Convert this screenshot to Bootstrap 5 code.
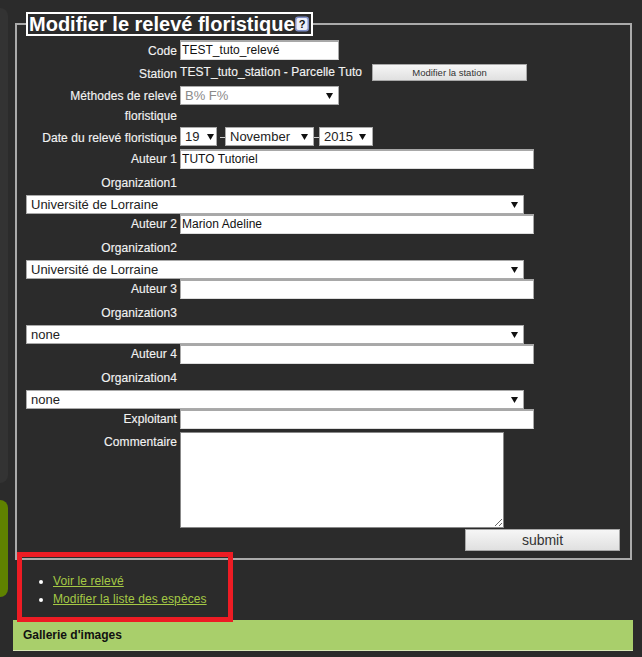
<!DOCTYPE html>
<html lang="fr">
<head>
<meta charset="utf-8">
<title>Modifier le relevé floristique</title>
<link href="https://cdn.jsdelivr.net/npm/bootstrap@5.3.0/dist/css/bootstrap.min.css" rel="stylesheet">
<style>
html,body{height:100%}
body{background:#2b2b2b;color:#ececec;font-family:"Liberation Sans",Arial,sans-serif;font-size:12px;line-height:20px;overflow:hidden}
.cadre{position:relative;height:657px}
.rail{width:8px;flex:none}
.rail-gris{height:475px;margin-top:8px;background:#333;border-radius:0 9px 9px 0}
.rail-vert{height:97px;margin-top:17px;background:#5f8200;border-radius:0 8px 8px 0}
.principal{width:625px;margin-left:5px;flex:none}
.bloc{margin:12px 0 0 2px;width:617px;height:548px;border:2px solid #aaa;border-radius:0;padding:4px 9px 0;min-width:0}
.bloc legend{float:none;width:auto;margin:0;padding:0 2px 0 1px;border:2px solid #fff;font-size:20px;font-weight:700;line-height:20px;color:#fff;height:24px;display:flex;align-items:center;gap:0}
.aide{display:block;flex:none}
.rang{display:flex;align-items:flex-start;column-gap:3px}
.lib{width:151px;flex:none;text-align:right;margin:1px 0 0;color:#f2f2f2;letter-spacing:.08px;-webkit-text-stroke:.15px #f2f2f2}
.lib.m0{margin-top:0}.lib.m3{margin-top:3px}.lib.m4{margin-top:4px}
.h-code{height:20px}.h-sta{height:26px}.h-met{height:41px}.h-dat{height:22px}.h-aut{height:20px}.h-org{height:26px}.h-sel{height:19px}.h-com{height:100px}
.bloc .champ{display:block;height:20px;padding:0 1px 2px;font-family:inherit;font-size:12px;line-height:16px;color:#111;background:#fff;border:0;border-top:2px solid #a8a8a8;border-radius:0;box-shadow:none;border-left:1px solid #a8a8a8;border-right:1px solid #a8a8a8;border-bottom:1px solid #ddd;letter-spacing:.05px}
.l-court{width:159px}.l-long{width:354px}
.bloc .choix{display:block;height:19px;padding:0 16px 0 4px;font-family:inherit;font-size:13px;line-height:17px;color:#222;background-color:#fff;background-image:url("data:image/svg+xml,%3Csvg xmlns='http://www.w3.org/2000/svg' width='8' height='6'%3E%3Cpath d='M0 0h8L4 6z' fill='%23111'/%3E%3C/svg%3E");background-repeat:no-repeat;background-position:right 5px center;background-size:7px 6px;border:1px solid #aaa;border-radius:0;box-shadow:none;appearance:none;width:auto}
.bloc .choix:disabled{color:#8a8a8a;opacity:1}
.bloc .s-meth{width:159px}.bloc .s-jour{width:37px;background-position:right 2px center}.bloc .s-mois{width:89px;background-position:right 5px center}.bloc .s-an{width:54px;background-position:right 6px center}.bloc .s-org{width:498px}
.dates{display:flex;align-items:flex-start}
.dates i{display:block;width:5px;height:1px;background:#cfcfcf;margin-top:10px;flex:none}
.dates i.ecart{margin-left:3px}
.val{margin-top:2px;width:189px;flex:none;white-space:nowrap;color:#f2f2f2;letter-spacing:.06px;-webkit-text-stroke:.15px #f2f2f2}
.btn.pousse{display:block;padding:0;border:1px solid #a8a8a8;border-radius:0;color:#333;background:linear-gradient(#f6f6f6,#e0e0e0);font-family:inherit}
.b-sta{width:155px;height:17px;font-size:9.5px;line-height:15px;margin-top:4px}
.b-env{width:155px;height:22px;font-size:14px;line-height:20px;margin-left:439px}
.bloc textarea.champ{width:324px;height:96px;margin-top:3px;resize:both;border:1px solid #888}
.suite{list-style:disc;margin:12px 0 0;padding:0 0 0 40px;line-height:18px;color:#fff;height:47px;letter-spacing:.1px}
.suite a{color:#a5c945;text-decoration:underline}
.galerie{width:620px;height:31px;background:#a9cf6b;border-bottom:1px solid #d9e8b8;color:#111;font-weight:700;padding:5px 10px;margin-top:1px}
.annot{position:absolute;left:17px;top:552px;width:216px;height:70px;border:5px solid #ed1c24;pointer-events:none}
</style>
</head>
<body>
<div class="cadre d-flex">
  <div class="rail"><div class="rail-gris"></div><div class="rail-vert"></div></div>
  <div class="principal">
    <form>
    <fieldset class="bloc">
      <legend>Modifier le relevé floristique<svg class="aide" width="14" height="16" viewBox="0 0 14 16" aria-hidden="true"><rect x=".75" y="1.25" width="12.5" height="13.5" rx="2.5" fill="#eef0fa" stroke="#8090c8" stroke-width="1.5"/><text x="7" y="12" text-anchor="middle" font-size="11" font-weight="700" fill="#111" font-family="Liberation Sans">?</text></svg></legend>
      <div class="rang h-code"><label class="lib">Code</label><input class="form-control champ l-court" value="TEST_tuto_relevé"></div>
      <div class="rang h-sta"><label class="lib m4">Station</label><div class="val">TEST_tuto_station - Parcelle Tuto</div><button type="button" class="btn pousse b-sta">Modifier la station</button></div>
      <div class="rang h-met"><label class="lib m0">Méthodes de relevé floristique</label><select class="form-select choix s-meth" disabled><option>B% F%</option></select></div>
      <div class="rang h-dat"><label class="lib">Date du relevé floristique</label><div class="dates"><select class="form-select choix s-jour"><option>19</option></select><i class="ecart"></i><select class="form-select choix s-mois"><option>November</option></select><i></i><select class="form-select choix s-an"><option>2015</option></select></div></div>
      <div class="rang h-aut"><label class="lib m0">Auteur 1</label><input class="form-control champ l-long" value="TUTO Tutoriel"></div>
      <div class="rang h-org"><label class="lib m4">Organization1</label></div>
      <div class="h-sel"><select class="form-select choix s-org"><option>Université de Lorraine</option></select></div>
      <div class="rang h-aut"><label class="lib m0">Auteur 2</label><input class="form-control champ l-long" value="Marion Adeline"></div>
      <div class="rang h-org"><label class="lib m4">Organization2</label></div>
      <div class="h-sel"><select class="form-select choix s-org"><option>Université de Lorraine</option></select></div>
      <div class="rang h-aut"><label class="lib m0">Auteur 3</label><input class="form-control champ l-long"></div>
      <div class="rang h-org"><label class="lib m4">Organization3</label></div>
      <div class="h-sel"><select class="form-select choix s-org"><option>none</option></select></div>
      <div class="rang h-aut"><label class="lib m0">Auteur 4</label><input class="form-control champ l-long"></div>
      <div class="rang h-org"><label class="lib m4">Organization4</label></div>
      <div class="h-sel"><select class="form-select choix s-org"><option>none</option></select></div>
      <div class="rang h-aut"><label class="lib m0">Exploitant</label><input class="form-control champ l-long"></div>
      <div class="rang h-com"><label class="lib m3">Commentaire</label><textarea class="form-control champ"></textarea></div>
      <button type="submit" class="btn pousse b-env">submit</button>
    </fieldset>
    </form>
    <ul class="suite">
      <li><a href="#">Voir le relevé</a></li>
      <li><a href="#">Modifier la liste des espèces</a></li>
    </ul>
    <div class="galerie">Gallerie d'images</div>
  </div>
  <div class="annot"></div>
</div>
<script src="https://cdn.jsdelivr.net/npm/bootstrap@5.3.0/dist/js/bootstrap.bundle.min.js"></script>
</body>
</html>
